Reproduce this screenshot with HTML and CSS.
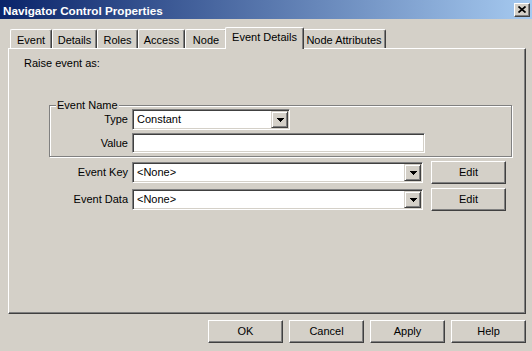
FILE: index.html
```html
<!DOCTYPE html>
<html>
<head>
<meta charset="utf-8">
<link rel="stylesheet" href="styles.css">
</head>
<body>
<div class="window">
  <div class="titlebar">
    <span class="title">Navigator Control Properties</span>
    <div class="close"><svg width="8" height="7" viewBox="0 0 8 7"><path d="M0.5 0.5 L7.5 6.5 M7.5 0.5 L0.5 6.5" stroke="#000" stroke-width="1.7" fill="none"/></svg></div>
  </div>
  <div class="content">
    <div class="tabs">
      <div class="tab t1">Event</div>
      <div class="tab t2">Details</div>
      <div class="tab t3">Roles</div>
      <div class="tab t4">Access</div>
      <div class="tab t5">Node</div>
      <div class="tab t6 selected">Event Details</div>
      <div class="tab t7">Node Attributes</div>
    </div>
    <div class="panel">
      <div class="raise">Raise event as:</div>
      <div class="group">
        <div class="legend">Event Name</div>
        <div class="ggrid">
          <div class="lbl">Type</div>
          <div class="combo type"><span class="ctext">Constant</span><div class="drop"><svg width="7" height="4" viewBox="0 0 7 4" shape-rendering="crispEdges"><path d="M0 0h7v1h-1v1h-1v1h-1v1h-1v-1h-1v-1h-1v-1h-1z" fill="#000"/></svg></div></div>
          <div class="lbl">Value</div>
          <div class="field value"></div>
        </div>
      </div>
      <div class="rows">
        <div class="lbl">Event Key</div>
        <div class="combo wide"><span class="ctext">&lt;None&gt;</span><div class="drop"><svg width="7" height="4" viewBox="0 0 7 4" shape-rendering="crispEdges"><path d="M0 0h7v1h-1v1h-1v1h-1v1h-1v-1h-1v-1h-1v-1h-1z" fill="#000"/></svg></div></div>
        <div class="btn">Edit</div>
        <div class="lbl">Event Data</div>
        <div class="combo wide"><span class="ctext">&lt;None&gt;</span><div class="drop"><svg width="7" height="4" viewBox="0 0 7 4" shape-rendering="crispEdges"><path d="M0 0h7v1h-1v1h-1v1h-1v1h-1v-1h-1v-1h-1v-1h-1z" fill="#000"/></svg></div></div>
        <div class="btn">Edit</div>
      </div>
    </div>
    <div class="footer">
      <div class="btn">OK</div>
      <div class="btn">Cancel</div>
      <div class="btn">Apply</div>
      <div class="btn">Help</div>
    </div>
  </div>
</div>
</body>
</html>
```

FILE: styles.css
```css
* { box-sizing: border-box; }
html, body {
  margin: 0;
  padding: 0;
  background: #d4d0c8;
}
body {
  font-family: "Liberation Sans", Arial, sans-serif;
  font-size: 11px;
  line-height: 13px;
  color: #000;
}
.window {
  width: 532px;
  height: 351px;
  background: #d4d0c8;
  overflow: hidden;
}
.titlebar {
  height: 19px;
  display: flex;
  align-items: flex-start;
  justify-content: space-between;
  background: linear-gradient(to right, #0a246a, #a6caf0);
  padding: 0 2px 0 3px;
}
.title {
  color: #fff;
  font-weight: bold;
  font-size: 11.7px;
  line-height: 17px;
  padding-top: 2px;
}
.close {
  width: 16px;
  height: 14px;
  margin-top: 3px;
  background: #d4d0c8;
  border: 1px solid;
  border-color: #fff #404040 #404040 #fff;
  box-shadow: inset -1px -1px 0 #808080;
  display: flex;
  align-items: center;
  justify-content: center;
  padding-bottom: 1px;
}
.close svg { display: block; }
.content {
  padding: 8px 0 0 8px;
}
.tabs {
  display: flex;
  align-items: flex-end;
  height: 21px;
  padding-left: 2px;
}
.tab {
  position: relative;
  height: 19px;
  border-top: 1px solid #fff;
  border-left: 1px solid #fff;
  border-right: 1px solid #404040;
  border-radius: 2px 2px 0 0;
  box-shadow: inset -1px 0 0 #808080;
  text-align: center;
  padding-top: 4px;
  white-space: nowrap;
  background: #d4d0c8;
}
.t1 { width: 42px; }
.t2 { width: 45px; }
.t3 { width: 41px; }
.t4 { width: 47px; }
.t5 { width: 42px; }
.t6 { width: 79px; }
.t7 { width: 84px; }
.tab.selected {
  height: 22px;
  margin: 0 -2px -1px -2px;
  z-index: 2;
  padding-top: 3px;
}
.panel {
  width: 518px;
  height: 266px;
  border: 1px solid;
  border-color: #fff #404040 #404040 #fff;
  box-shadow: inset -1px -1px 0 #808080;
}
.raise {
  margin: 8px 0 0 15px;
}
.group {
  margin: 35px 0 0 40px;
  width: 463px;
  height: 52px;
  border: 1px solid #808080;
  box-shadow: 1px 1px 0 #fff, inset 1px 1px 0 #fff;
}
.legend {
  display: block;
  width: fit-content;
  margin: -7px 0 0 6px;
  padding: 0 1px;
  background: #d4d0c8;
  height: 13px;
}
.ggrid {
  display: grid;
  grid-template-columns: 78px auto;
  column-gap: 4px;
  row-gap: 3px;
  margin-top: -3px;
  align-items: center;
  justify-items: start;
}
.lbl {
  justify-self: end;
  white-space: nowrap;
}
.field, .combo {
  background: #fff;
  border: 1px solid;
  border-color: #808080 #fff #fff #808080;
  box-shadow: inset 1px 1px 0 #404040, inset -1px -1px 0 #d4d0c8;
}
.value { width: 293px; height: 20px; }
.combo {
  height: 21px;
  padding: 1px;
  display: flex;
  align-items: center;
}
.type { width: 158px; }
.wide { width: 291px; }
.ctext {
  flex: 1;
  padding-left: 3px;
  white-space: nowrap;
}
.drop {
  width: 17px;
  height: 17px;
  background: #d4d0c8;
  border: 1px solid;
  border-color: #d4d0c8 #404040 #404040 #d4d0c8;
  box-shadow: inset 1px 1px 0 #fff, inset -1px -1px 0 #808080;
  display: flex;
  align-items: center;
  justify-content: center;
  padding-left: 1px;
}
.drop svg { display: block; }
.rows {
  display: grid;
  grid-template-columns: 119px 291px 75px;
  grid-auto-rows: 23px;
  column-gap: 4px;
  row-gap: 4px;
  margin-top: 4px;
  align-items: center;
}
.rows .btn { margin-left: 4px; }
.btn {
  width: 75px;
  height: 23px;
  background: #d4d0c8;
  border: 1px solid;
  border-color: #fff #404040 #404040 #fff;
  box-shadow: inset -1px -1px 0 #808080;
  text-align: center;
  line-height: 20px;
}
.footer {
  display: flex;
  justify-content: flex-end;
  gap: 6px;
  padding: 6px 6px 0 0;
}
```
